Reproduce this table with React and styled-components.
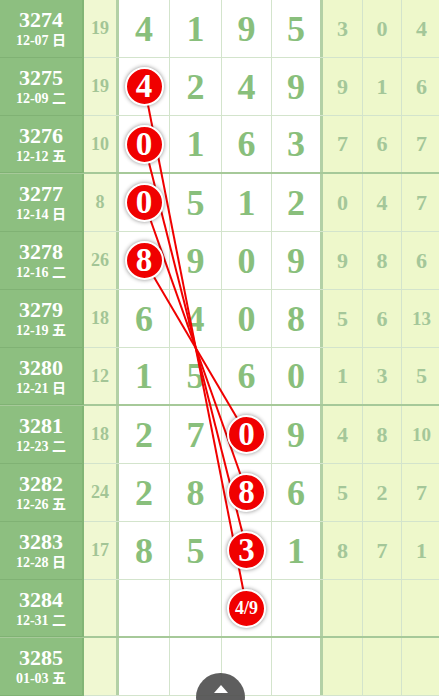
import React from 'react'
import styled, { createGlobalStyle } from 'styled-components'

const ROW_H = 58
const COLS = [84, 35, 51, 52, 50, 51, 40, 39, 40]
const colCenter = i => COLS.slice(0, i).reduce((a, b) => a + b, 0) + COLS[i] / 2

const rows = [
  { no: '3274', date: '12-07 日', sum: '19', d: ['4', '1', '9', '5'], r: ['3', '0', '4'] },
  { no: '3275', date: '12-09 二', sum: '19', d: ['4', '2', '4', '9'], r: ['9', '1', '6'], ball: 0 },
  { no: '3276', date: '12-12 五', sum: '10', d: ['0', '1', '6', '3'], r: ['7', '6', '7'], ball: 0, thick: true },
  { no: '3277', date: '12-14 日', sum: '8', d: ['0', '5', '1', '2'], r: ['0', '4', '7'], ball: 0 },
  { no: '3278', date: '12-16 二', sum: '26', d: ['8', '9', '0', '9'], r: ['9', '8', '6'], ball: 0 },
  { no: '3279', date: '12-19 五', sum: '18', d: ['6', '4', '0', '8'], r: ['5', '6', '13'] },
  { no: '3280', date: '12-21 日', sum: '12', d: ['1', '5', '6', '0'], r: ['1', '3', '5'], thick: true },
  { no: '3281', date: '12-23 二', sum: '18', d: ['2', '7', '0', '9'], r: ['4', '8', '10'], ball: 2 },
  { no: '3282', date: '12-26 五', sum: '24', d: ['2', '8', '8', '6'], r: ['5', '2', '7'], ball: 2 },
  { no: '3283', date: '12-28 日', sum: '17', d: ['8', '5', '3', '1'], r: ['8', '7', '1'], ball: 2 },
  { no: '3284', date: '12-31 二', sum: '', d: ['', '', '4/9', ''], r: ['', '', ''], ball: 2, thick: true },
  { no: '3285', date: '01-03 五', sum: '', d: ['', '', '', ''], r: ['', '', ''] },
]

// pairs of rows whose balls are joined by a red line
const links = [[1, 10], [2, 9], [3, 8], [4, 7]]

const GlobalStyle = createGlobalStyle`
  html, body {
    margin: 0;
    padding: 0;
    background: #fff;
    overflow: hidden;
  }
`

const Chart = styled.div`
  position: relative;
  width: 442px;
  font-family: "Liberation Serif", "Noto Sans CJK SC", serif;
`

const Row = styled.div`
  display: grid;
  grid-template-columns: ${COLS.map(c => c + 'px').join(' ')};
  height: ${ROW_H}px;
  box-sizing: border-box;
  border-bottom: ${p => (p.$thick ? '2px solid #a6c999' : '1px solid #d3e4cc')};
`

const Issue = styled.div`
  display: flex;
  flex-direction: column;
  align-items: center;
  justify-content: center;
  background: #8dbf80;
  color: #fff;
  font-weight: bold;
  border-right: 2px solid #82b576;
  margin-bottom: -1px;
  box-shadow: inset 0 -1px 0 #80b274;
`

const IssueNo = styled.span`
  font-size: 22px;
  line-height: 24px;
`

const IssueDate = styled.span`
  font-size: 14px;
  line-height: 18px;
`

const Cell = styled.div`
  display: flex;
  align-items: center;
  justify-content: center;
  font-weight: bold;
  box-sizing: border-box;
  border-right: 1px solid #d3e4cc;
`

const SumCell = styled(Cell)`
  background: #f0f8d2;
  color: #a3c596;
  font-size: 18px;
  border-right: 3px solid #b3d1a6;
`

const DigitCell = styled(Cell)`
  color: #89bf7c;
  font-size: 36px;
  border-right: ${p => (p.$last ? '3px solid #b3d1a6' : '1px solid #d3e4cc')};
`

const RightCell = styled(Cell)`
  background: #eef8cb;
  color: #a4c799;
  font-size: ${p => (p.$small ? '19px' : '22px')};
`

const Ball = styled.span`
  position: relative;
  z-index: 2;
  display: flex;
  align-items: center;
  justify-content: center;
  width: 39px;
  height: 39px;
  box-sizing: border-box;
  border-radius: 50%;
  border: 2px solid #fff;
  background: #f00000;
  color: #fff;
  font-size: ${p => (p.$small ? '18px' : '33px')};
  box-shadow: 0 0 4px rgba(0, 0, 0, 0.45);
`

const Links = styled.svg`
  position: absolute;
  left: 0;
  top: 0;
  z-index: 1;
  pointer-events: none;
`

const UpButton = styled.div`
  position: fixed;
  left: 196px;
  top: 673px;
  width: 49px;
  height: 49px;
  border-radius: 50%;
  background: rgba(80, 80, 80, 0.92);
  z-index: 3;
  display: flex;
  justify-content: center;
  padding-top: 12px;
  box-sizing: border-box;
`

const Arrow = styled.span`
  width: 0;
  height: 0;
  border-left: 7px solid transparent;
  border-right: 7px solid transparent;
  border-bottom: 8px solid #fff;
`

const rowCenter = n => n * ROW_H + ROW_H / 2

export default function App() {
  return (
    <>
      <GlobalStyle />
      <Chart>
        {rows.map(row => (
          <Row key={row.no} $thick={row.thick}>
            <Issue>
              <IssueNo>{row.no}</IssueNo>
              <IssueDate>{row.date}</IssueDate>
            </Issue>
            <SumCell>{row.sum}</SumCell>
            {row.d.map((v, i) => (
              <DigitCell key={i} $last={i === 3}>
                {row.ball === i ? <Ball $small={v.length > 1}>{v}</Ball> : v}
              </DigitCell>
            ))}
            {row.r.map((v, i) => (
              <RightCell key={i} $small={v.length > 1}>{v}</RightCell>
            ))}
          </Row>
        ))}
        <Links width="442" height={rows.length * ROW_H}>
          {links.map(([a, b]) => (
            <line
              key={a}
              x1={colCenter(2 + rows[a].ball)}
              y1={rowCenter(a)}
              x2={colCenter(2 + rows[b].ball)}
              y2={rowCenter(b)}
              stroke="#f00000"
              strokeWidth="2"
            />
          ))}
        </Links>
      </Chart>
      <UpButton>
        <Arrow />
      </UpButton>
    </>
  )
}
